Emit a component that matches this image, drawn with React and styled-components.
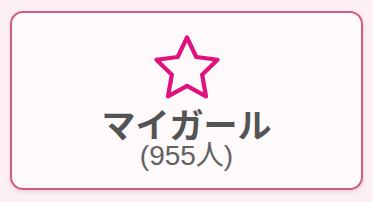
import React from "react";
import styled, { createGlobalStyle } from "styled-components";

const Global = createGlobalStyle`
  html, body { margin: 0; padding: 0; background: #fcf0f5; }
  body { font-family: "Liberation Sans", "Noto Sans CJK JP", sans-serif; }
`;

const Page = styled.div`
  width: 373px;
  height: 202px;
  box-sizing: border-box;
  padding: 11px 10px 12px 10px;
`;

const Card = styled.div`
  box-sizing: border-box;
  width: 353px;
  height: 179px;
  border: 2px solid #d35b82;
  border-radius: 13px;
  background: #fef9fb;
  box-shadow: 0 2px 4px rgba(160, 80, 110, 0.18);
  display: flex;
  flex-direction: column;
  align-items: center;
  padding-top: 17px;
`;

const Icon = styled.svg`
  display: block;
  width: 78px;
  height: 78px;
`;

const Title = styled.div`
  margin-top: -2px;
  font-family: "Noto Sans CJK JP", sans-serif;
  font-weight: 700;
  font-size: 34px;
  line-height: 35px;
  color: #545454;
`;

const Count = styled.div`
  font-family: "Liberation Sans", "Noto Sans CJK JP", sans-serif;
  font-size: 28px;
  line-height: 29px;
  color: #626262;
`;

export default function App() {
  return (
    <>
      <Global />
      <Page>
        <Card>
          <Icon viewBox="0 0 24 24" fill="none" stroke="#e0137e" strokeWidth="1.3" strokeLinejoin="round" strokeLinecap="round">
            <path d="M12 2.3 L14.85 8.3 L21.4 9.15 L16.65 13.75 L17.85 20.4 L12 17.2 L6.15 20.4 L7.35 13.75 L2.6 9.15 L9.15 8.3 Z" />
          </Icon>
          <Title>マイガール</Title>
          <Count>(955人)</Count>
        </Card>
      </Page>
    </>
  );
}
